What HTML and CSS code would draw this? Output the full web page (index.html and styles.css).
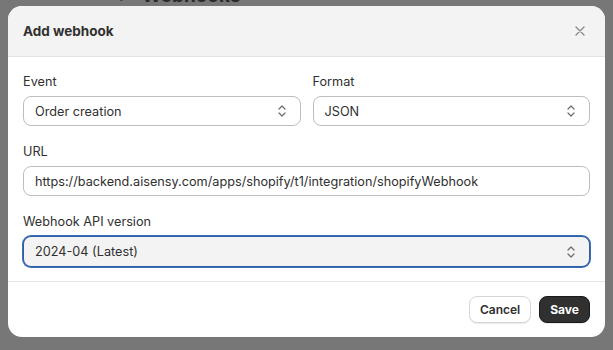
FILE: index.html
```html
<!DOCTYPE html>
<html lang="en">
<head>
  <meta charset="UTF-8" />
  <title>Add webhook</title>
  <link rel="stylesheet" href="styles.css">
</head>
<body>

  <div class="behind">
    <div class="behind-title"><span class="back">&lsaquo;</span> Webhooks</div>
  </div>

  <div class="modal">
    <div class="modal-header">
      <h2>Add webhook</h2>
      <span class="close">
        <svg width="10" height="10" viewBox="0 0 10 10"><path d="M1 1L9 9M9 1L1 9" stroke="#8a8a8a" stroke-width="1.4" stroke-linecap="round"/></svg>
      </span>
    </div>

    <div class="modal-body">
      <div class="row">
        <div class="field">
          <label>Event</label>
          <div class="select">
            <span>Order creation</span>
            <svg class="updown" width="10" height="14" viewBox="0 0 10 14"><path d="M2 5L5 2L8 5M2 9L5 12L8 9" fill="none" stroke="#6b6b6b" stroke-width="1.2" stroke-linecap="round" stroke-linejoin="round"/></svg>
          </div>
        </div>
        <div class="field">
          <label>Format</label>
          <div class="select">
            <span>JSON</span>
            <svg class="updown" width="10" height="14" viewBox="0 0 10 14"><path d="M2 5L5 2L8 5M2 9L5 12L8 9" fill="none" stroke="#6b6b6b" stroke-width="1.2" stroke-linecap="round" stroke-linejoin="round"/></svg>
          </div>
        </div>
      </div>

      <div class="field">
        <label>URL</label>
        <div class="select">
          <span>https://backend.aisensy.com/apps/shopify/t1/integration/shopifyWebhook</span>
        </div>
      </div>

      <div class="field">
        <label>Webhook API version</label>
        <div class="select focused">
          <span>2024-04 (Latest)</span>
          <svg class="updown" width="10" height="14" viewBox="0 0 10 14"><path d="M2 5L5 2L8 5M2 9L5 12L8 9" fill="none" stroke="#6b6b6b" stroke-width="1.2" stroke-linecap="round" stroke-linejoin="round"/></svg>
        </div>
      </div>
    </div>

    <div class="modal-footer">
      <button class="btn">Cancel</button>
      <button class="btn primary">Save</button>
    </div>
  </div>

</body>
</html>
```

FILE: styles.css
```css
body {
  font-family: 'Inter', sans-serif;
  margin: 0;
  background-color: #777777;
  color: #303030;
  font-size: 12.7px;
}

.behind {
  height: 6px;
  overflow: hidden;
  padding-left: 116px;
}

.behind-title {
  margin-top: -15px;
  font-size: 19px;
  font-weight: 700;
  color: #2a2a2a;
  line-height: 22px;
}

.back {
  font-weight: 400;
  margin-right: 14px;
}

.modal {
  margin: 0 8px;
  background: white;
  border-radius: 14px;
  overflow: hidden;
}

.modal-header {
  display: flex;
  align-items: center;
  justify-content: space-between;
  background-color: #f3f3f3;
  height: 50px;
  padding: 0 20px 0 15px;
  border-bottom: 1px solid #e3e3e3;
}

.modal-header h2 {
  margin: 0;
  font-size: 13.5px;
  font-weight: 650;
  color: #303030;
}

.close {
  display: flex;
}

.modal-body {
  padding: 17px 15px 14px 15px;
  display: flex;
  flex-direction: column;
  gap: 18px;
}

.row {
  display: flex;
  gap: 12px;
}

.row .field {
  flex: 1;
}

.field label {
  display: block;
  line-height: 16px;
  margin-bottom: 6px;
  color: #303030;
}

.select {
  display: flex;
  align-items: center;
  justify-content: space-between;
  height: 30px;
  box-sizing: border-box;
  padding: 0 11px;
  border: 1px solid #bdbdbd;
  border-radius: 8px;
  background: white;
}

.select.focused {
  height: 31px;
  background: #f3f3f3;
  border-color: #2c5fa8;
  box-shadow: 0 0 0 1px #3c6db4;
}

.updown {
  margin-right: 2px;
}

.modal-footer {
  display: flex;
  justify-content: flex-end;
  gap: 8px;
  padding: 14px 15px 14px;
  border-top: 1px solid #e8e8e8;
}

.btn {
  font-family: 'Inter', sans-serif;
  font-size: 12px;
  font-weight: 600;
  height: 27px;
  padding: 0 10px;
  border: 1px solid #d6d6d6;
  border-radius: 8px;
  background: white;
  color: #303030;
  box-shadow: 0 1px 0 rgba(0,0,0,0.08);
}

.btn.primary {
  background: #303030;
  border-color: #1a1a1a;
  color: white;
  font-weight: 700;
}
```
